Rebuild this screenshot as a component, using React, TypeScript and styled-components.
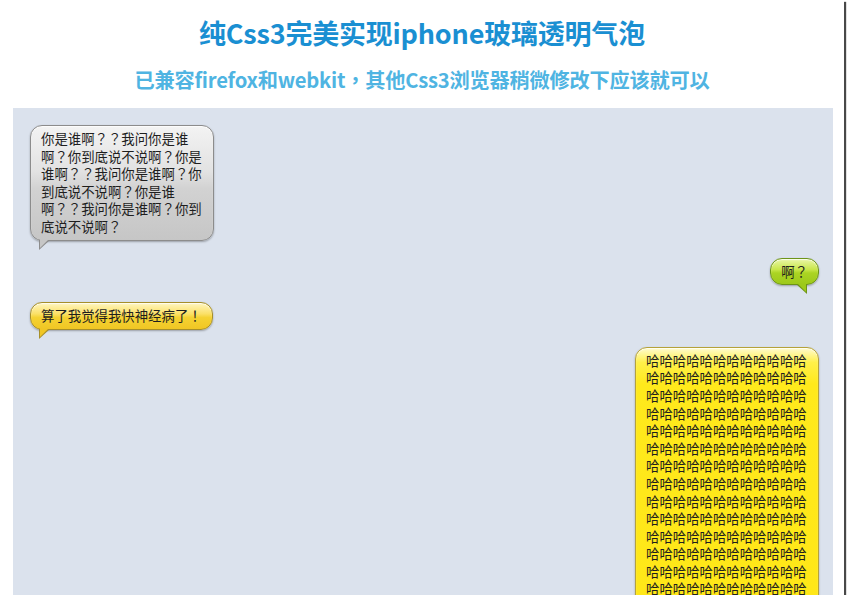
import styled, { createGlobalStyle, css } from 'styled-components';

const GlobalStyle = createGlobalStyle`
  body {
    margin: 0;
    background: #fff;
  }
`;

type Side = 'left' | 'right';
type Tone = 'gray' | 'green' | 'amber' | 'lemon';

const tones: Record<Tone, { border: string; bg: string; tail: string }> = {
  gray: {
    border: '#8c8c8c',
    bg: 'linear-gradient(to bottom, #f3f3f3 0%, #e2e2e2 40%, #d2d2d2 55%, #c6c6c6 100%)',
    tail: '#c6c6c6',
  },
  green: {
    border: '#6d9419',
    bg: 'linear-gradient(to bottom, #eaf7a8 0%, #c8e64a 42%, #abd423 56%, #9dc91b 100%)',
    tail: '#9dc91b',
  },
  amber: {
    border: '#a68f2a',
    bg: 'linear-gradient(to bottom, #fff6c0 0%, #fbe066 42%, #f5d232 56%, #f0c624 100%)',
    tail: '#f0c624',
  },
  lemon: {
    border: '#b5a23a',
    bg: 'linear-gradient(to bottom, #fffbd0 0%, #fff04a 4%, #ffe91c 10%, #ffe616 100%)',
    tail: '#ffe616',
  },
};

const Frame = styled.div`
  width: 844px;
  height: 595px;
  overflow: hidden;
  display: flex;
  flex-direction: column;
  background: #fff;
  box-shadow: 2px 2px 1px rgba(40, 40, 40, 0.85);
  font-family: "Noto Sans CJK SC", "Noto Sans", sans-serif;
`;

const Header = styled.header`
  height: 108px;
  display: flex;
  flex-direction: column;
  align-items: center;
  flex-shrink: 0;
`;

const Title = styled.h1`
  margin: 14px 0 0;
  font-size: 27px;
  line-height: 38px;
  font-weight: 700;
  color: #1a8fd2;
  letter-spacing: -0.2px;
`;

const Subtitle = styled.h2`
  margin: 14px 0 0;
  font-family: "Noto Sans CJK TC", "Noto Sans CJK SC", sans-serif;
  font-size: 20.2px;
  line-height: 28px;
  font-weight: 700;
  color: #4fb4e2;
  letter-spacing: -0.2px;
`;

const Panel = styled.section`
  flex: 1;
  margin: 0 11px 0 13px;
  padding: 17px 14px 0 17px;
  background: #dbe2ed;
  display: flex;
  flex-direction: column;
  gap: 17px;
`;

const Bubble = styled.div<{ $side: Side; $tone: Tone }>`
  position: relative;
  align-self: ${(p) => (p.$side === 'left' ? 'flex-start' : 'flex-end')};
  max-width: 162px;
  padding: 4px 10px;
  border: 1px solid ${(p) => tones[p.$tone].border};
  border-radius: 12px;
  background: ${(p) => tones[p.$tone].bg};
  box-shadow: 0 1px 2px rgba(0, 0, 0, 0.3), inset 0 1px 1px rgba(255, 255, 255, 0.8);
  font-family: "Noto Sans CJK TC", "Noto Sans CJK SC", sans-serif;
  font-size: 13.4px;
  line-height: 17.6px;
  color: #1e1e1e;
  word-break: break-all;
  flex-shrink: 0;

  &::before,
  &::after {
    content: '';
    position: absolute;
    width: 0;
    height: 0;
  }

  &::before {
    bottom: -10px;
    border-top: 10px solid ${(p) => tones[p.$tone].border};
  }

  &::after {
    bottom: -8px;
    border-top: 9px solid ${(p) => tones[p.$tone].tail};
  }

  ${(p) =>
    p.$side === 'left'
      ? css`
          &::before {
            left: 8px;
            border-right: 11px solid transparent;
          }
          &::after {
            left: 9px;
            border-right: 9px solid transparent;
          }
        `
      : css`
          &::before {
            right: 11px;
            border-left: 11px solid transparent;
          }
          &::after {
            right: 12px;
            border-left: 9px solid transparent;
          }
        `}
`;

const laugh = '哈'.repeat(12 * 20);

export default function App() {
  return (
    <>
      <GlobalStyle />
      <Frame>
        <Header>
          <Title>纯Css3完美实现iphone玻璃透明气泡</Title>
          <Subtitle>已兼容firefox和webkit，其他Css3浏览器稍微修改下应该就可以</Subtitle>
        </Header>
        <Panel>
          <Bubble $side="left" $tone="gray">
            你是谁啊？？我问你是谁啊？你到底说不说啊？你是谁啊？？我问你是谁啊？你到底说不说啊？你是谁啊？？我问你是谁啊？你到底说不说啊？
          </Bubble>
          <Bubble $side="right" $tone="green">
            啊？
          </Bubble>
          <Bubble $side="left" $tone="amber">
            算了我觉得我快神经病了！
          </Bubble>
          <Bubble $side="right" $tone="lemon">
            {laugh}
          </Bubble>
        </Panel>
      </Frame>
    </>
  );
}
